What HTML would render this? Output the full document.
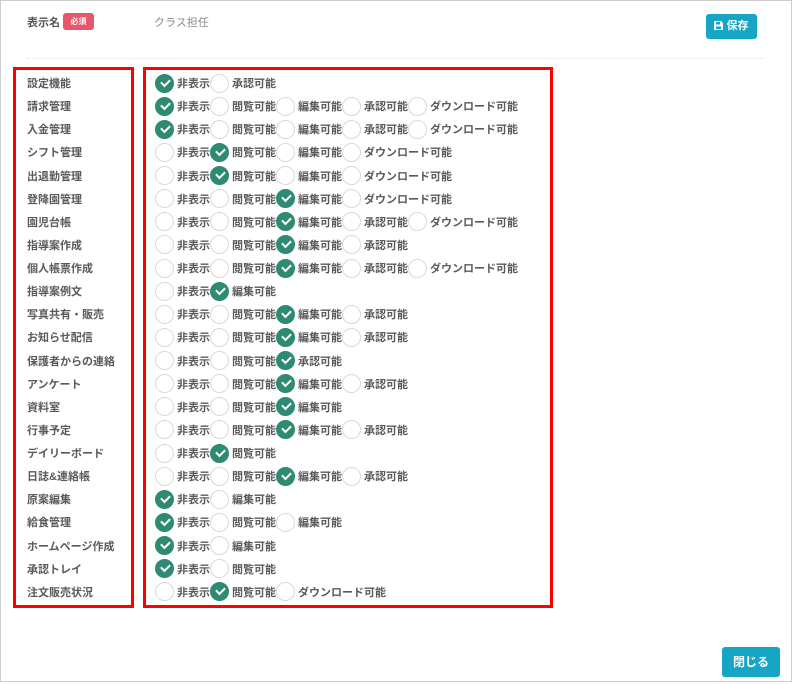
<!DOCTYPE html>
<html><head><meta charset="utf-8"><style>
*{box-sizing:border-box;margin:0;padding:0}
body{width:794px;height:684px;background:#fff;font-family:"Liberation Sans","Noto Sans CJK JP",sans-serif;position:relative;overflow:hidden}
.frame{position:absolute;left:0;top:0;width:792px;height:682px;border:1px solid #ccc}
.t{position:absolute;font-size:11px;font-weight:bold;color:#555}
.badge{position:absolute;left:63px;top:13px;width:31px;height:17px;background:#e8566c;border-radius:3px;color:#fff;font-size:8px;font-weight:bold;text-align:center;line-height:17px}
.btn{position:absolute;background:#17a5c6;color:#fff;border-radius:3px;font-size:11px;font-weight:bold;text-align:center}
.dot{position:absolute;left:27px;top:58px;width:738px;border-top:1px dotted #e2e2e2}
.box{position:absolute;border:3px solid #f00}
.rows{position:absolute;left:155px;top:71.5px}
.lab{position:absolute;left:27px;top:71.5px}
.r{height:23.14px;display:flex;align-items:center;font-size:11px;font-weight:bold;color:#5a5a5a;white-space:nowrap}
.c{width:19px;height:19px;border-radius:50%;border:1px solid #d8d8d8;background:#fff;margin-right:3px;flex:none;position:relative}
.k{background:#2e8a73;border-color:#2e8a73}
.k::after{content:"";position:absolute;left:5px;top:4px;width:7px;height:4px;border-left:2px solid #fff;border-bottom:2px solid #fff;transform:rotate(-45deg)}
</style></head><body>
<div class="frame"></div>
<div class="t" style="left:27px;top:14px">表示名</div>
<div class="badge">必須</div>
<div class="t" style="left:154px;top:14px;font-weight:normal;color:#888">クラス担任</div>
<div class="btn" style="left:706px;top:14px;width:51px;height:25px;line-height:25px"><svg width="9" height="9" viewBox="0 0 9 9" style="vertical-align:-1px"><path d="M0 0H7L9 2V9H0Z" fill="#fff"/><rect x="2" y="1" width="4" height="2.5" fill="#17a5c6"/><rect x="2" y="5.5" width="5" height="2.5" fill="#17a5c6"/></svg> 保存</div>
<div class="dot"></div>
<div class="box" style="left:13px;top:67px;width:121px;height:541px"></div>
<div class="box" style="left:143px;top:67px;width:410px;height:541px"></div>
<div class="lab">
<div class="r">設定機能</div><div class="r">請求管理</div><div class="r">入金管理</div><div class="r">シフト管理</div><div class="r">出退勤管理</div><div class="r">登降園管理</div><div class="r">園児台帳</div><div class="r">指導案作成</div><div class="r">個人帳票作成</div><div class="r">指導案例文</div><div class="r">写真共有・販売</div><div class="r">お知らせ配信</div><div class="r">保護者からの連絡</div><div class="r">アンケート</div><div class="r">資料室</div><div class="r">行事予定</div><div class="r">デイリーボード</div><div class="r">日誌&amp;連絡帳</div><div class="r">原案編集</div><div class="r">給食管理</div><div class="r">ホームページ作成</div><div class="r">承認トレイ</div><div class="r">注文販売状況</div>
</div>
<div class="rows">
<div class="r"><i class="c k"></i>非表示<i class="c"></i>承認可能</div>
<div class="r"><i class="c k"></i>非表示<i class="c"></i>閲覧可能<i class="c"></i>編集可能<i class="c"></i>承認可能<i class="c"></i>ダウンロード可能</div>
<div class="r"><i class="c k"></i>非表示<i class="c"></i>閲覧可能<i class="c"></i>編集可能<i class="c"></i>承認可能<i class="c"></i>ダウンロード可能</div>
<div class="r"><i class="c"></i>非表示<i class="c k"></i>閲覧可能<i class="c"></i>編集可能<i class="c"></i>ダウンロード可能</div>
<div class="r"><i class="c"></i>非表示<i class="c k"></i>閲覧可能<i class="c"></i>編集可能<i class="c"></i>ダウンロード可能</div>
<div class="r"><i class="c"></i>非表示<i class="c"></i>閲覧可能<i class="c k"></i>編集可能<i class="c"></i>ダウンロード可能</div>
<div class="r"><i class="c"></i>非表示<i class="c"></i>閲覧可能<i class="c k"></i>編集可能<i class="c"></i>承認可能<i class="c"></i>ダウンロード可能</div>
<div class="r"><i class="c"></i>非表示<i class="c"></i>閲覧可能<i class="c k"></i>編集可能<i class="c"></i>承認可能</div>
<div class="r"><i class="c"></i>非表示<i class="c"></i>閲覧可能<i class="c k"></i>編集可能<i class="c"></i>承認可能<i class="c"></i>ダウンロード可能</div>
<div class="r"><i class="c"></i>非表示<i class="c k"></i>編集可能</div>
<div class="r"><i class="c"></i>非表示<i class="c"></i>閲覧可能<i class="c k"></i>編集可能<i class="c"></i>承認可能</div>
<div class="r"><i class="c"></i>非表示<i class="c"></i>閲覧可能<i class="c k"></i>編集可能<i class="c"></i>承認可能</div>
<div class="r"><i class="c"></i>非表示<i class="c"></i>閲覧可能<i class="c k"></i>承認可能</div>
<div class="r"><i class="c"></i>非表示<i class="c"></i>閲覧可能<i class="c k"></i>編集可能<i class="c"></i>承認可能</div>
<div class="r"><i class="c"></i>非表示<i class="c"></i>閲覧可能<i class="c k"></i>編集可能</div>
<div class="r"><i class="c"></i>非表示<i class="c"></i>閲覧可能<i class="c k"></i>編集可能<i class="c"></i>承認可能</div>
<div class="r"><i class="c"></i>非表示<i class="c k"></i>閲覧可能</div>
<div class="r"><i class="c"></i>非表示<i class="c"></i>閲覧可能<i class="c k"></i>編集可能<i class="c"></i>承認可能</div>
<div class="r"><i class="c k"></i>非表示<i class="c"></i>編集可能</div>
<div class="r"><i class="c k"></i>非表示<i class="c"></i>閲覧可能<i class="c"></i>編集可能</div>
<div class="r"><i class="c k"></i>非表示<i class="c"></i>編集可能</div>
<div class="r"><i class="c k"></i>非表示<i class="c"></i>閲覧可能</div>
<div class="r"><i class="c"></i>非表示<i class="c k"></i>閲覧可能<i class="c"></i>ダウンロード可能</div>
</div>
<div class="btn" style="left:722px;top:647px;width:58px;height:30px;line-height:30px;font-size:12px">閉じる</div>
</body></html>
